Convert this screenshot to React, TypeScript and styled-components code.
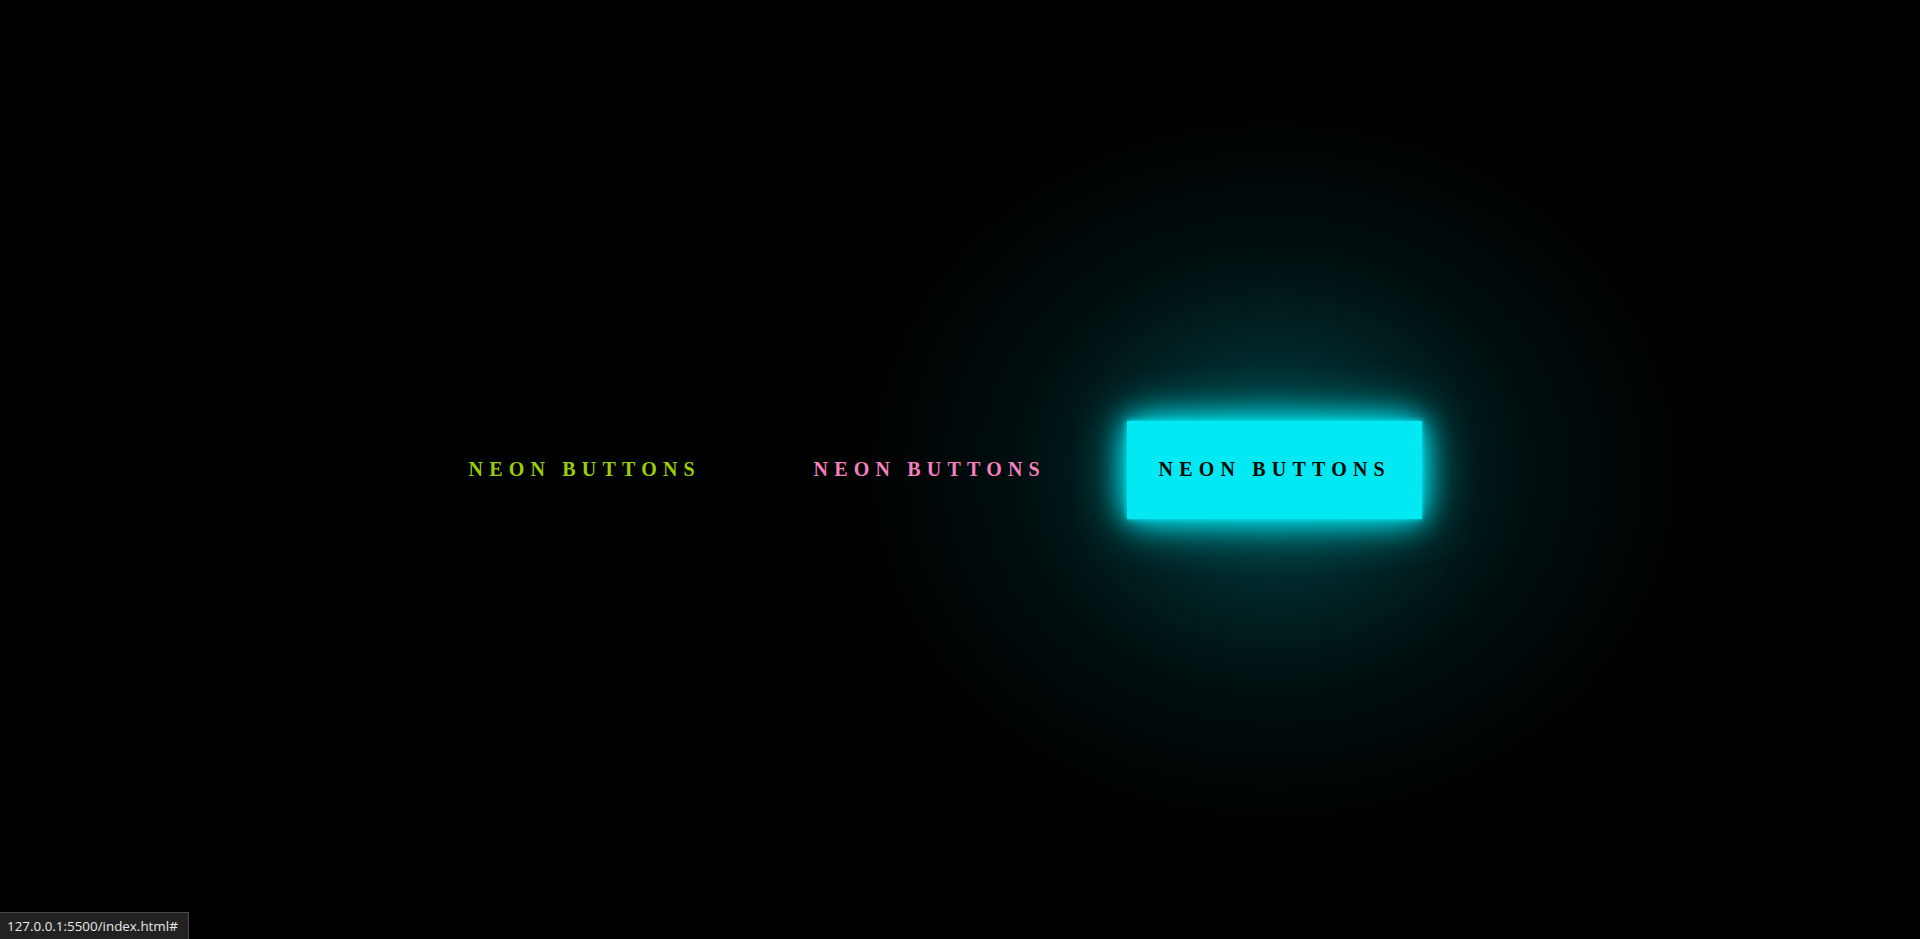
import React from "react";
import styled, { createGlobalStyle } from "styled-components";

const GlobalStyle = createGlobalStyle`
  html, body {
    margin: 0;
    padding: 0;
    background: #000;
  }
  #root {
    min-height: 100vh;
  }
`;

const Page = styled.div`
  position: relative;
  z-index: 0;
  display: flex;
  align-items: center;
  justify-content: center;
  gap: 50px;
  min-height: 100vh;
  padding-right: 62px;
  box-sizing: border-box;
  background: #000;
  overflow: hidden;
`;

const NeonButton = styled.a<{ $color: string; $glow: string; $active?: boolean }>`
  position: relative;
  display: block;
  box-sizing: border-box;
  width: 295px;
  height: 98px;
  padding: 37px 0 0 32px;
  font-family: "Liberation Serif", "Times New Roman", serif;
  font-size: 20px;
  font-weight: bold;
  line-height: 23px;
  letter-spacing: 6.2px;
  text-transform: uppercase;
  text-decoration: none;
  white-space: nowrap;
  color: ${(p) => (p.$active ? "#050801" : p.$color)};
  background: ${(p) => (p.$active ? p.$color : "transparent")};
  box-shadow: ${(p) =>
    p.$active
      ? `0 0 5px ${p.$color}, 0 0 25px ${p.$color}, 0 0 50px ${p.$color}`
      : "none"};
  cursor: pointer;

  &::before {
    content: "";
    display: ${(p) => (p.$active ? "block" : "none")};
    position: absolute;
    left: 50%;
    top: 50%;
    width: 900px;
    height: 780px;
    transform: translate(-50%, -50%);
    z-index: -1;
    pointer-events: none;
    background: radial-gradient(
      ellipse closest-side,
      rgba(${(p) => p.$glow}, 0.34) 0%,
      rgba(${(p) => p.$glow}, 0.22) 20%,
      rgba(${(p) => p.$glow}, 0.13) 38%,
      rgba(${(p) => p.$glow}, 0.06) 58%,
      rgba(${(p) => p.$glow}, 0.02) 80%,
      rgba(${(p) => p.$glow}, 0) 100%
    );
  }
`;

const StatusBar = styled.div`
  position: fixed;
  left: 0;
  bottom: 0;
  height: 27px;
  padding: 0 10px 0 7px;
  display: flex;
  align-items: center;
  background: #222;
  border: 1px solid #4a4a4a;
  border-left: none;
  border-bottom: none;
  box-sizing: border-box;
  font-family: "Open Sans", "Noto Sans", sans-serif;
  font-size: 13.4px;
  color: #e8e8e8;
`;

const App: React.FC = () => {
  return (
    <>
      <GlobalStyle />
      <Page>
        <NeonButton href="#" $color="#9acd0a" $glow="154, 205, 10">
          Neon Buttons
        </NeonButton>
        <NeonButton href="#" $color="#f57fbf" $glow="245, 127, 191">
          Neon Buttons
        </NeonButton>
        <NeonButton href="#" $color="#03e9f4" $glow="3, 233, 244" $active>
          Neon Buttons
        </NeonButton>
      </Page>
      <StatusBar>127.0.0.1:5500/index.html#</StatusBar>
    </>
  );
};

export default App;
